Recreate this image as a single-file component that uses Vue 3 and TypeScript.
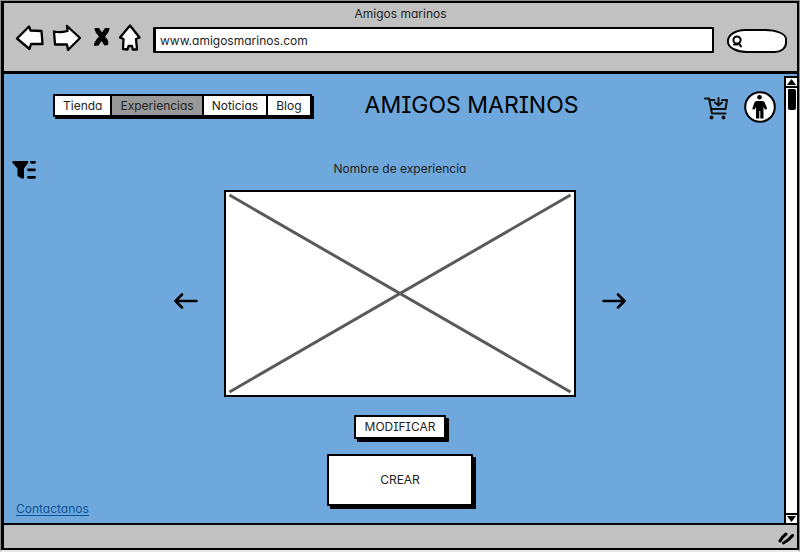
<script setup lang="ts">
import { ref } from 'vue'

const sections: string[] = ['Tienda', 'Experiencias', 'Noticias', 'Blog']
const current = ref<string>('Experiencias')
const address = ref<string>('www.amigosmarinos.com')
const query = ref<string>('')
</script>

<template>
  <div class="frame">
    <header class="chrome">
      <div class="window-title">Amigos marinos</div>
      <div class="toolbar">
        <button class="icon" type="button" aria-label="Back">
          <svg width="29" height="30" viewBox="0 0 29 30" class="outlined">
            <path d="M2 14.5 L14 2.5 L15.5 6.5 L26.5 7 L27.5 20 L16 20 L14.5 25 Z" />
          </svg>
        </button>
        <button class="icon" type="button" aria-label="Forward">
          <svg width="30" height="30" viewBox="0 0 30 30" class="outlined">
            <path d="M2 7.5 Q8 9 15.5 7 L15 2 L28 14 L16 26 L15 20.5 L3 20.5 Z" />
          </svg>
        </button>
        <button class="icon" type="button" aria-label="Stop">
          <svg width="20" height="30" viewBox="0 0 20 30">
            <path d="M4.5 4 L9 4 L12 8.5 L15 4 L19.5 4 Q19.5 8 15 12.5 Q19.5 17 18 21 L14.5 21.5 L11.5 17 L8.5 21.5 L4 22 Q3.5 18 9 12.5 Q4.5 8 4.5 4 Z" />
          </svg>
        </button>
        <button class="icon" type="button" aria-label="Home">
          <svg width="27" height="30" viewBox="0 0 27 30" class="outlined">
            <path d="M12 1.5 L21.5 13.5 L18 15 L19 25.5 L14.8 25.5 L14 22 L10.5 22 L9.5 25.5 L5 25 L5.5 15 L2 13.5 Z" />
          </svg>
        </button>
        <input v-model="address" class="address" type="text" aria-label="Address" />
        <div class="search">
          <svg width="14" height="16" viewBox="0 0 14 16">
            <circle cx="6" cy="7" r="3.6" />
            <path d="M3 11.5 L6.5 11.5 M8 10.5 L10 13.5" />
          </svg>
          <input v-model="query" type="search" aria-label="Search" />
        </div>
      </div>
    </header>

    <div class="viewport">
      <div class="page">
        <div class="site-header">
          <nav class="tabs">
            <button
              v-for="name in sections"
              :key="name"
              type="button"
              :class="{ active: name === current }"
              @click="current = name"
            >{{ name }}</button>
          </nav>
          <h1>AMIGOS MARINOS</h1>
          <div class="account">
            <button class="icon" type="button" aria-label="Cart">
              <svg width="26" height="26" viewBox="0 0 26 26" class="cart">
                <path d="M1 4.5 H5 L8 19.5 H21.5" />
                <path d="M6 6 H10.5 M18 6 H23 L21.5 15 H7.5" />
                <path d="M14.5 4 V11 M11 8.5 L14.5 11.5 L18 8.5" />
                <circle cx="7.5" cy="23.5" r="1" />
                <circle cx="19.5" cy="23.5" r="1" />
              </svg>
            </button>
            <button class="icon" type="button" aria-label="Account">
              <svg width="32" height="32" viewBox="0 0 32 32">
                <circle cx="16" cy="16" r="14.8" fill="#fff" stroke="#000" stroke-width="2" />
                <circle cx="15.5" cy="6.3" r="2.3" />
                <path d="M12.5 10 H18.5 Q20 10 20.7 11.5 L23 17 Q23 19 21 18.5 L19.5 16 V27.5 H16.3 V20 H15.3 V27.5 H12 V16 L10.5 18.5 Q8 19 8.5 17 L10.5 11.5 Q11 10 12.5 10 Z" />
              </svg>
            </button>
          </div>
        </div>

        <div class="experience-bar">
          <button class="icon" type="button" aria-label="Filter">
            <svg width="26" height="20" viewBox="0 0 26 20">
              <path d="M1 2 H15.5 Q17 2 16 4 L12 9.5 V19.5 H9.5 L5.5 17 V9.5 L.5 4 Q0 2 1 2 Z" />
              <path d="M19.5 3.3 H22.5 M16.5 10.8 H22.5 M16.5 18.3 H22.5" fill="none" stroke="#000" stroke-width="2.8" stroke-linecap="round" />
            </svg>
          </button>
          <h2>Nombre de experiencia</h2>
        </div>

        <div class="carousel">
          <button class="icon" type="button" aria-label="Previous">
            <svg width="24" height="16" viewBox="0 0 24 16" class="arrow">
              <path d="M22.5 8 H2 M8 1.5 L1.5 8 L8 14.5" />
            </svg>
          </button>
          <div class="picture">
            <svg viewBox="0 0 100 100" preserveAspectRatio="none">
              <path d="M1 1.5 L99 98.5 M1 98.5 L99 1.5" vector-effect="non-scaling-stroke" />
            </svg>
          </div>
          <button class="icon" type="button" aria-label="Next">
            <svg width="24" height="16" viewBox="0 0 24 16" class="arrow">
              <path d="M1.5 8 H22 M16 1.5 L22.5 8 L16 14.5" />
            </svg>
          </button>
        </div>

        <div class="bottom">
          <a href="#contacto">Contactanos</a>
          <div class="actions">
            <button class="action" type="button">MODIFICAR</button>
            <button class="action large" type="button">CREAR</button>
          </div>
        </div>
      </div>

      <div class="scrollbar">
        <button type="button" aria-label="Scroll up">
          <svg width="9" height="6" viewBox="0 0 9 6"><path d="M4.5 0 L9 6 H0 Z" /></svg>
        </button>
        <div class="track"><div class="thumb"></div></div>
        <button type="button" aria-label="Scroll down">
          <svg width="9" height="6" viewBox="0 0 9 6"><path d="M4.5 6 L9 0 H0 Z" /></svg>
        </button>
      </div>
    </div>

    <footer class="status">
      <svg width="17" height="16" viewBox="0 0 17 16">
        <path d="M2 12 Q4 8 8 5 M5.5 14 Q10 12 14.5 6.5" />
      </svg>
    </footer>
  </div>
</template>

<style>
body {
  margin: 0;
  background: #e8e8e8;
}
</style>

<style scoped>
.frame {
  box-sizing: border-box;
  min-height: 100vh;
  display: flex;
  flex-direction: column;
  border: 1px solid #8c908c;
  border-bottom: 2px solid #e8e8e8;
  padding: 2px 2px 2px 3px;
  background: #000;
  color: #222;
  font-family: Inter, "Liberation Sans", sans-serif;
  font-size: 12px;
  line-height: 16px;
  font-feature-settings: "cv11", "cv08";
}

button,
input {
  font: inherit;
  font-feature-settings: inherit;
  color: inherit;
}

svg {
  display: block;
}

.icon {
  display: block;
  flex: none;
  margin: 0;
  padding: 0;
  border: 0;
  background: none;
}

.chrome {
  height: 68px;
  background: #c1c1c1;
  border-bottom: 3px solid #000;
}

.window-title {
  height: 20px;
  line-height: 22px;
  text-align: center;
}

.toolbar {
  display: flex;
  align-items: center;
  gap: 8px;
  padding: 0 10px 0 11px;
  height: 32px;
}

.outlined {
  fill: #fff;
  stroke: #000;
  stroke-width: 2.3;
  stroke-linejoin: round;
}

.address {
  flex: 1;
  min-width: 0;
  box-sizing: border-box;
  height: 26px;
  margin-top: 2px;
  padding: 0 4px;
  border: 2px solid #000;
  border-left-width: 3px;
  border-radius: 1px;
  background: #fff;
}

.search {
  display: flex;
  align-items: center;
  box-sizing: border-box;
  width: 60px;
  height: 24px;
  margin: 4px 0 0 5px;
  padding-left: 2px;
  border: 2px solid #000;
  border-radius: 18px 22px 12px 20px / 12px 10px 10px 11px;
  background: #fff;
}

.search svg {
  flex: none;
  fill: none;
  stroke: #000;
  stroke-width: 2;
  stroke-linecap: round;
}

.search input {
  width: 36px;
  min-width: 0;
  padding: 0;
  border: 0;
  background: none;
}

.viewport {
  flex: 1;
  display: flex;
  background: #6fa8dc;
}

.page {
  flex: 1;
  min-width: 0;
  display: flex;
  flex-direction: column;
  padding: 15px 8px 6px;
}

.site-header {
  display: flex;
  align-items: center;
  height: 32px;
  padding-left: 41px;
}

.tabs {
  display: flex;
  border: 2px solid #000;
  box-shadow: 2px 2px 0 #000;
  background: #000;
  gap: 2px;
}

.tabs button {
  height: 19px;
  padding: 0 8px;
  border: 0;
  background: #fff;
  line-height: 19px;
}

.tabs .active {
  background: #999;
}

h1 {
  margin: 0 0 0 53px;
  color: #000;
  font-size: 23px;
  line-height: 28px;
  font-weight: 400;
}

.account {
  display: flex;
  align-items: center;
  gap: 14px;
  margin-top: 4px;
  margin-left: auto;
}

.cart {
  fill: none;
  stroke: #111;
  stroke-width: 2;
  stroke-linejoin: round;
  stroke-linecap: round;
}

.experience-bar {
  display: grid;
  grid-template-columns: 26px 1fr 14px;
  align-items: center;
  height: 20px;
  margin-top: 38px;
}

h2 {
  margin: 0;
  font-size: 12px;
  line-height: 16px;
  font-weight: 400;
  text-align: center;
}

.carousel {
  display: flex;
  justify-content: center;
  align-items: center;
  gap: 26px;
  margin-top: 11px;
  padding-left: 12px;
}

.carousel .icon {
  padding-top: 14px;
}

.picture {
  box-sizing: border-box;
  width: 44vw;
  aspect-ratio: 352 / 207;
  border: 2px solid #000;
  background: #fff;
}

.picture svg {
  width: 100%;
  height: 100%;
  fill: none;
  stroke: #5a5a5a;
  stroke-width: 3;
}

.arrow {
  fill: none;
  stroke: #000;
  stroke-width: 2.6;
  stroke-linecap: round;
  stroke-linejoin: round;
}

.bottom {
  flex: 1;
  display: grid;
  grid-template-columns: 1fr auto 1fr;
  padding-left: 12px;
}

.bottom a {
  justify-self: start;
  align-self: end;
  margin-left: -8px;
  color: #0b5394;
  text-underline-offset: 2px;
}

.actions {
  display: flex;
  flex-direction: column;
  align-items: center;
  gap: 15px;
  padding-top: 18px;
}

.action {
  padding: 1px 9px;
  border: 2px solid #000;
  border-radius: 1px;
  background: #fff;
  box-shadow: 3px 3px 0 #000;
  line-height: 18px;
}

.large {
  padding: 15px 51px;
}

.scrollbar {
  display: flex;
  flex-direction: column;
  width: 11px;
  margin-top: 2px;
  border-left: 2px solid #000;
  border-top: 2px solid #000;
  background: #fff;
}

.scrollbar button {
  display: grid;
  place-items: center;
  height: 8px;
  padding: 0;
  border: 0;
  background: #fff;
}

.track {
  flex: 1;
  border: solid #000;
  border-width: 2px 0;
}

.thumb {
  width: 8px;
  height: 21px;
  margin: 1px 2px;
  border-radius: 1px 2px 2px;
  background: #000;
}

.status {
  display: flex;
  justify-content: flex-end;
  align-items: center;
  height: 22px;
  padding-top: 1px;
  padding-right: 2px;
  border-top: 2px solid #000;
  background: #c1c1c1;
}

.status svg {
  fill: none;
  stroke: #000;
  stroke-width: 3;
  stroke-linecap: round;
}
</style>
